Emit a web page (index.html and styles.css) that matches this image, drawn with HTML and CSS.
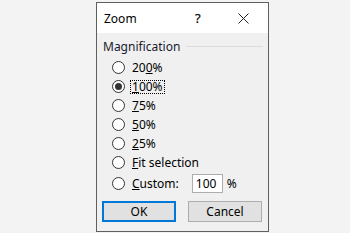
FILE: index.html
```html
<!DOCTYPE html>
<html>
<head>
<meta charset="utf-8">
<link rel="stylesheet" href="styles.css">
</head>
<body>
<div class="dialog">
  <div class="titlebar">
    <span class="title">Zoom</span>
    <span class="help">?</span>
    <span class="close"><svg width="11" height="11" viewBox="0 0 11 11"><path d="M0.5 0.5 L10.5 10.5 M10.5 0.5 L0.5 10.5" stroke="#222" stroke-width="1" fill="none"/></svg></span>
  </div>
  <div class="body">
    <div class="group"><span class="group-label">Magnification</span><span class="rule"></span></div>
    <div class="options">
      <div class="opt"><span class="radio"></span><span class="lbl">20<u>0</u>%</span></div>
      <div class="opt"><span class="radio checked"></span><span class="lbl focus"><u>1</u>00%</span></div>
      <div class="opt"><span class="radio"></span><span class="lbl"><u>7</u>5%</span></div>
      <div class="opt"><span class="radio"></span><span class="lbl"><u>5</u>0%</span></div>
      <div class="opt"><span class="radio"></span><span class="lbl"><u>2</u>5%</span></div>
      <div class="opt"><span class="radio"></span><span class="lbl"><u>F</u>it selection</span></div>
      <div class="opt custom"><span class="radio"></span><span class="lbl"><u>C</u>ustom:</span><span class="input">100</span><span class="pct">%</span></div>
    </div>
    <div class="buttons">
      <button class="btn ok">OK</button>
      <button class="btn">Cancel</button>
    </div>
  </div>
</div>
</body>
</html>
```

FILE: styles.css
```css
html, body {
  margin: 0;
  padding: 0;
  background: #f3f3f3;
}
body {
  font-family: "Noto Sans", "DejaVu Sans", sans-serif;
  font-size: 12px;
  color: #000;
  padding-top: 2px;
}
.dialog {
  margin-left: 96px;
  width: 171px;
  height: 228px;
  border: 1px solid #5f5f5f;
  background: #f0f0f0;
  display: flex;
  flex-direction: column;
}
.titlebar {
  height: 30px;
  background: #fff;
  display: flex;
  align-items: center;
  flex: none;
}
.title {
  margin-left: 7px;
  font-size: 12px;
  flex: 1;
}
.help {
  width: 10px;
  margin-right: 33px;
  font-size: 13px;
  -webkit-text-stroke: 0.2px #000;
}
.close {
  width: 11px;
  height: 11px;
  margin-right: 19px;
  display: flex;
}
.body {
  flex: 1;
  display: flex;
  flex-direction: column;
}
.group {
  display: flex;
  align-items: center;
  height: 16px;
  margin-top: 5px;
  padding-left: 6px;
  padding-right: 5px;
  color: #1a1a2e;
}
.group-label {
  white-space: nowrap;
}
.rule {
  flex: 1;
  height: 1px;
  background: #dcdcdc;
  margin-left: 6px;
}
.options {
  display: flex;
  flex-direction: column;
  padding-left: 15px;
  margin-top: 4px;
}
.opt {
  display: flex;
  align-items: center;
  height: 19px;
}
.radio {
  width: 11px;
  height: 11px;
  border: 1px solid #333;
  border-radius: 50%;
  background: #fff;
  flex: none;
  display: flex;
  align-items: center;
  justify-content: center;
}
.radio.checked::after {
  content: "";
  width: 7px;
  height: 7px;
  border-radius: 50%;
  background: #333;
}
.lbl {
  margin-left: 5px;
  padding: 0 1px;
  line-height: 12px;
  border: 1px dotted transparent;
}
.lbl.focus {
  border-color: #000;
}
.lbl u {
  text-decoration-thickness: 1px;
  text-underline-offset: 1px;
}
.custom {
  height: 21px;
  margin-top: 1px;
}
.input {
  margin-left: 11px;
  width: 26px;
  height: 17px;
  line-height: 17px;
  padding-left: 3px;
  background: #fff;
  border: 1px solid #adadad;
}
.pct {
  margin-left: 4px;
}
.buttons {
  display: flex;
  gap: 12px;
  padding-left: 5px;
  margin-top: 7px;
}
.btn {
  width: 74px;
  height: 21px;
  font-family: inherit;
  font-size: 12px;
  background: #e1e1e1;
  border: 1px solid #adadad;
  padding: 0;
  color: #000;
}
.btn.ok {
  border: 2px solid #0078d7;
}
```
